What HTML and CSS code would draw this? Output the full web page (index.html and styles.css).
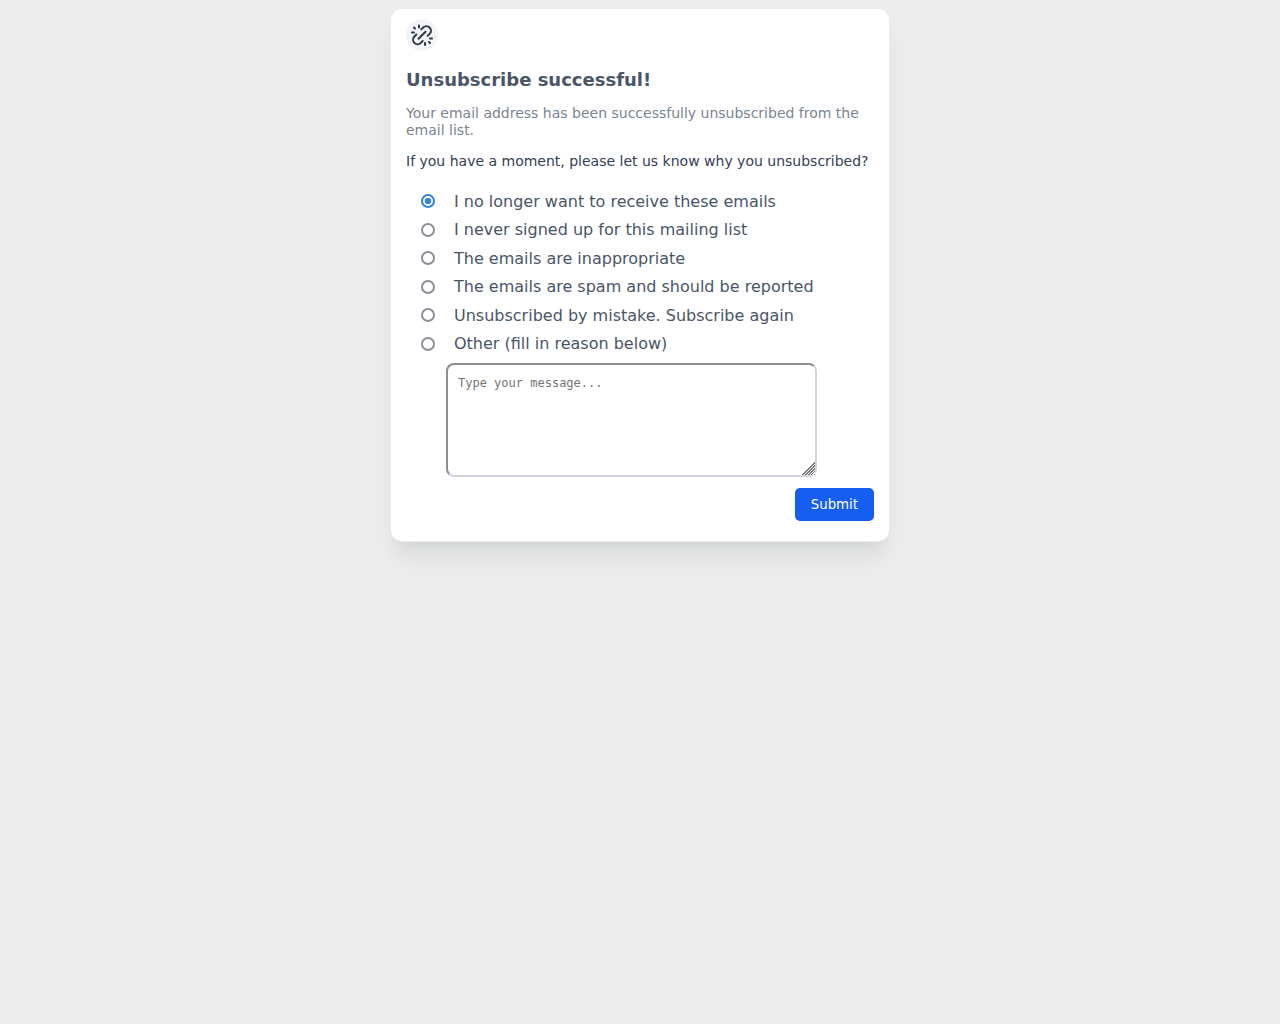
FILE: index.html
```html
<!DOCTYPE html>
<html lang="en">
<head>
    <meta charset="UTF-8">
    <meta name="viewport" content="width=device-width, initial-scale=1.0">
    <title>Unsubscribe</title>
    <link rel="stylesheet" href="styles.css">
</head>
<body>

    <main class="card">
        <div class="icon-circle">
            <svg class="icon" viewBox="0 0 24 24" aria-hidden="true">
                <path d="M11.3 6.4l1.9-1.9a4.5 4.5 0 0 1 6.4 6.4L17.6 12.9"/>
                <path d="M12.7 18l-1.9 1.9a4.5 4.5 0 0 1-6.4-6.4L6.4 11.5"/>
                <path d="M8.5 15.7l7-7"/>
                <path d="M9 2.5v2M4 4.5l1 1M2 9.5h2"/>
                <path d="M15 22v-2M20 20l-1-1M22 15.5h-2"/>
            </svg>
        </div>
        <h1 class="title">Unsubscribe successful!</h1>
        <p class="description">Your email address has been successfully unsubscribed from the email list.</p>

        <form class="form">
            <p class="question" id="question">If you have a moment, please let us know why you unsubscribed?</p>
            <div class="options" role="radiogroup" aria-labelledby="question">
                <label class="option"><input type="radio" name="reason" value="no-longer" checked> I no longer want to receive these emails</label>
                <label class="option"><input type="radio" name="reason" value="never-signed-up"> I never signed up for this mailing list</label>
                <label class="option"><input type="radio" name="reason" value="inappropriate"> The emails are inappropriate</label>
                <label class="option"><input type="radio" name="reason" value="spam"> The emails are spam and should be reported</label>
                <label class="option"><input type="radio" name="reason" value="mistake"> Unsubscribed by mistake. Subscribe again</label>
                <label class="option"><input type="radio" name="reason" value="other"> Other (fill in reason below)</label>
            </div>
            <textarea class="message" aria-label="Other reason" placeholder="Type your message..."></textarea>
            <div class="actions">
                <button type="submit" class="submit-btn">Submit</button>
            </div>
        </form>
    </main>

</body>
</html>
```
FILE: styles.css
```css
* {
    box-sizing: border-box;
}

body {
    min-height: 100vh;
    margin: 0;
    padding: 8px;
    background-color: #ededed;
    color: #4a5568;
    font-family: 'DejaVu Sans', sans-serif;
    font-size: 16px;
}

.card {
    max-width: 500px;
    margin: 0 auto;
    padding: 10px 15px 20px;
    background-color: white;
    border: 1px solid #e8ebef;
    border-radius: 12px;
    box-shadow: 0 20px 25px -5px rgba(0, 20, 20, 0.08), 0 10px 10px -5px rgba(0, 0, 0, 0.03);
}

.icon-circle {
    display: flex;
    align-items: center;
    justify-content: center;
    width: 32px;
    height: 32px;
    border-radius: 50%;
    background-color: #f2f4f8;
}

.icon {
    width: 24px;
    height: 24px;
    fill: none;
    stroke: #2d3748;
    stroke-width: 2;
    stroke-linecap: round;
    stroke-linejoin: round;
}

.title {
    margin: 18px 0 14px;
    font-size: 18px;
    line-height: 22px;
}

.description {
    margin: 0 0 14px;
    color: #7b8491;
    font-size: 14px;
    line-height: 17px;
}

.question {
    margin: 0 0 17px;
    color: #344054;
    font-size: 14px;
    line-height: 17px;
}

.options {
    display: grid;
    grid-auto-rows: 1fr;
    min-height: 171px;
    padding: 0 15px;
}

.option {
    display: flex;
    align-items: center;
    gap: 19px;
}

/* Radio buttons */
.option input {
    appearance: none;
    width: 14px;
    height: 14px;
    margin: 0;
    border: 2px solid #8f8f9d;
    border-radius: 50%;
    background-color: white;
}

.option input:checked {
    border-color: #3584e4;
    background: radial-gradient(circle, #3584e4 3px, white 3px);
}

.message {
    display: block;
    width: calc(100% - 97px);
    height: 114px;
    margin: 5px 0 11px 40px;
    padding: 11px 10px;
    border: 2px solid #d0d5dd;
    border-top-color: #8b8e93;
    border-left-color: #8b8e93;
    border-radius: 8px;
    font-family: 'DejaVu Sans Mono', monospace;
    font-size: 12px;
}

.message::-webkit-resizer {
    background: linear-gradient(135deg, white 50%, transparent 50%), repeating-linear-gradient(135deg, #777 0 1px, white 1px 2px);
}

.actions {
    display: flex;
    justify-content: flex-end;
}

.submit-btn {
    padding: 8px 16px;
    border: none;
    border-radius: 5px;
    background-color: #155eef;
    color: white;
    font-family: inherit;
    line-height: 17px;
    cursor: pointer;
}

.submit-btn:hover {
    background-color: #004eeb;
}
```
